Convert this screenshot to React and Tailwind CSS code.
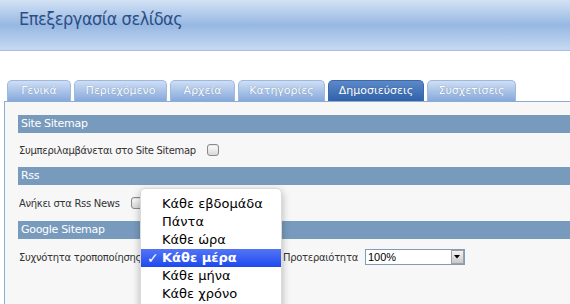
const tabs = [
  { label: 'Γενικά', w: 'w-[64px]' },
  { label: 'Περιεχόμενο', w: 'w-[93px]' },
  { label: 'Αρχεία', w: 'w-[65px]' },
  { label: 'Κατηγορίες', w: 'w-[87px]' },
  { label: 'Δημοσιεύσεις', w: 'w-[96px]', active: true },
  { label: 'Συσχετίσεις', w: 'w-[89px]' },
];

const menuItems = ['Κάθε εβδομάδα', 'Πάντα', 'Κάθε ώρα', 'Κάθε μέρα', 'Κάθε μήνα', 'Κάθε χρόνο'];

const Checkbox = () => (
  <span className="inline-block w-[12px] h-[12px] rounded-[3px] border border-[#8a8a8a] bg-gradient-to-b from-[#ffffff] to-[#d8d8d8] shadow-[inset_0_1px_1px_rgba(0,0,0,0.1)]" />
);

const SectionBar = ({ children }) => (
  <div className="h-[18px] bg-[#789bbd] text-white text-[11px] leading-[18px] pl-[3px]">{children}</div>
);

const App = () => {
  return (
    <div className="relative w-[570px] h-[304px] overflow-hidden bg-white font-['DejaVu_Sans',sans-serif]">
      {/* header */}
      <div className="h-[51px] border-b border-[#a3bfe3] bg-gradient-to-b from-[#d3e2f4] via-[#97b8e3] to-[#c6d9f1] pl-[19px] pt-[5px]">
        <h1 className="text-[18px] text-[#2c4f86] tracking-[-0.5px] font-['DejaVu_Sans_Condensed','DejaVu_Sans',sans-serif] [font-stretch:condensed]">
          Επεξεργασία σελίδας
        </h1>
      </div>

      {/* tabs */}
      <div className="flex gap-[3px] pl-[7px] mt-[29px] h-[21px]">
        {tabs.map((t) => (
          <div
            key={t.label}
            className={`${t.w} h-[21px] rounded-t-[5px] border border-b-0 flex items-center justify-center text-[11px] text-white [text-shadow:0_0_1px_rgba(40,70,120,0.5)] ${
              t.active
                ? 'border-[#3d69aa] bg-gradient-to-b from-[#5c89c8] to-[#2f62ab]'
                : 'border-[#9cb9e0] bg-gradient-to-b from-[#cfdef3] to-[#86a9dc]'
            }`}
          >
            {t.label}
          </div>
        ))}
      </div>

      {/* panel */}
      <div className="ml-[4px] border-l border-t border-[#8fabd2] bg-[#f7f7f7] h-[220px] pl-[13px] pt-[13px] text-[10px] tracking-[-0.3px] text-[#333]">
        <SectionBar>Site Sitemap</SectionBar>
        <div className="h-[34px] flex items-center gap-[11px] pl-[1px]">
          <span>Συμπεριλαμβάνεται στο Site Sitemap</span>
          <Checkbox />
        </div>
        <SectionBar>Rss</SectionBar>
        <div className="h-[36px] flex items-center gap-[11px] pl-[1px]">
          <span>Ανήκει στα Rss News</span>
          <Checkbox />
        </div>
        <SectionBar>Google Sitemap</SectionBar>
        <div className="h-[36px] flex items-center pl-[1px]">
          <span className="w-[264px]">Συχνότητα τροποποίησης</span>
          <span>Προτεραιότητα</span>
          <div className="ml-[7px] w-[100px] h-[16px] border border-[#7f9db9] bg-white flex items-center justify-between">
            <span className="pl-[2px] text-[11px] tracking-normal text-black font-['Liberation_Sans',sans-serif]">100%</span>
            <span className="w-[13px] h-[14px] border border-[#a0a0a0] bg-gradient-to-b from-[#f4f4f4] to-[#c8c8c8] flex items-center justify-center">
              <svg width="6" height="4" viewBox="0 0 6 4">
                <path d="M0 0h6L3 3.5z" fill="#000" />
              </svg>
            </span>
          </div>
        </div>
      </div>

      {/* open select menu */}
      <div className="absolute left-[140px] top-[188px] w-[142px] h-[130px] bg-white rounded-[5px] border border-[#dadada] shadow-[0_3px_9px_rgba(0,0,0,0.28)] pt-[6px] text-[13px] text-black">
        {menuItems.map((item) => (
          <div
            key={item}
            className={`h-[18px] leading-[18px] relative pl-[21px] ${
              item === 'Κάθε μέρα' ? 'bg-gradient-to-b from-[#5474f6] to-[#1c48ee] text-white font-bold' : ''
            }`}
          >
            {item === 'Κάθε μέρα' && <span className="absolute left-[6px] top-0 text-[14px]">✓</span>}
            {item}
          </div>
        ))}
      </div>
    </div>
  );
};

export default App;
